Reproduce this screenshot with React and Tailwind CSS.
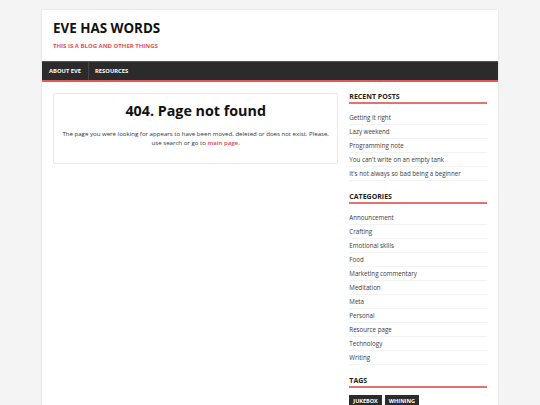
const recentPosts = [
  "Getting it right",
  "Lazy weekend",
  "Programming note",
  "You can't write on an empty tank",
  "It's not always so bad being a beginner",
];

const categories = [
  "Announcement",
  "Crafting",
  "Emotional skills",
  "Food",
  "Marketing commentary",
  "Meditation",
  "Meta",
  "Personal",
  "Resource page",
  "Technology",
  "Writing",
];

function WidgetTitle({ children }) {
  return (
    <div className="border-b-2 border-[#e07373] pb-[1px] mb-[7px]">
      <h3 className="text-[7px] font-bold uppercase text-[#222] leading-[8px]">{children}</h3>
    </div>
  );
}

function LinkList({ items }) {
  return (
    <ul>
      {items.map((t) => (
        <li
          key={t}
          className="text-[6.2px] text-[#3a3a3a] leading-[13px] border-b border-[#f2f2f2] h-[14px] flex items-center"
        >
          {t}
        </li>
      ))}
    </ul>
  );
}

export default function App() {
  return (
    <div
      className="min-h-[405px] bg-[#f4f4f4] pt-[10px]"
      style={{ fontFamily: '"Open Sans", "Liberation Sans", sans-serif' }}
    >
      <div className="mx-auto w-[456px] bg-white min-h-[395px] shadow-[0_0_2px_rgba(0,0,0,0.12)]">
        {/* Header */}
        <div className="px-[11px] pt-[9px] h-[51px]">
          <h1 className="text-[13.4px] font-bold text-[#111] leading-[18px]">EVE HAS WORDS</h1>
          <p className="text-[6px] font-bold text-[#e05151] uppercase mt-[5px] leading-[8px]">
            This is a blog and other things
          </p>
        </div>

        {/* Nav */}
        <nav className="bg-[#2b2b2b] border-t border-[#555] border-b-2 border-b-[#e05a5a] h-[21px] flex items-center">
          <span className="text-[5.8px] font-bold text-white px-[7px] h-full flex items-center border-r border-[#444]">
            ABOUT EVE
          </span>
          <span className="text-[5.8px] font-bold text-white px-[6px] h-full flex items-center">RESOURCES</span>
        </nav>

        {/* Body */}
        <div className="flex px-[11px] pt-[11px] gap-[11px]">
          <main className="w-[286px]">
            <div className="border border-[#e8e8e8] rounded-[2px] h-[71px] px-[4px] pt-[6px] text-center">
              <h2 className="text-[14.3px] font-bold text-[#111] leading-[22px]">404. Page not found</h2>
              <p className="text-[6.1px] text-[#333] leading-[9.5px] mt-[6.5px]">
                The page you were looking for appears to have been moved, deleted or does not exist. Please, use
                search or go to <span className="text-[#e04545] font-semibold">main page</span>.
              </p>
            </div>
          </main>

          <aside className="w-[138px]">
            <WidgetTitle>Recent Posts</WidgetTitle>
            <LinkList items={recentPosts} />

            <div className="mt-[12px]">
              <WidgetTitle>Categories</WidgetTitle>
              <LinkList items={categories} />
            </div>

            <div className="mt-[12px]">
              <WidgetTitle>Tags</WidgetTitle>
              <div className="flex gap-[3px] mt-[3px]">
                <span className="bg-[#2b2b2b] text-white text-[5.5px] font-bold px-[4px] py-[2px] leading-[8px]">
                  JUKEBOX
                </span>
                <span className="bg-[#2b2b2b] text-white text-[5.5px] font-bold px-[4px] py-[2px] leading-[8px]">
                  WHINING
                </span>
              </div>
            </div>
          </aside>
        </div>
      </div>
    </div>
  );
}
